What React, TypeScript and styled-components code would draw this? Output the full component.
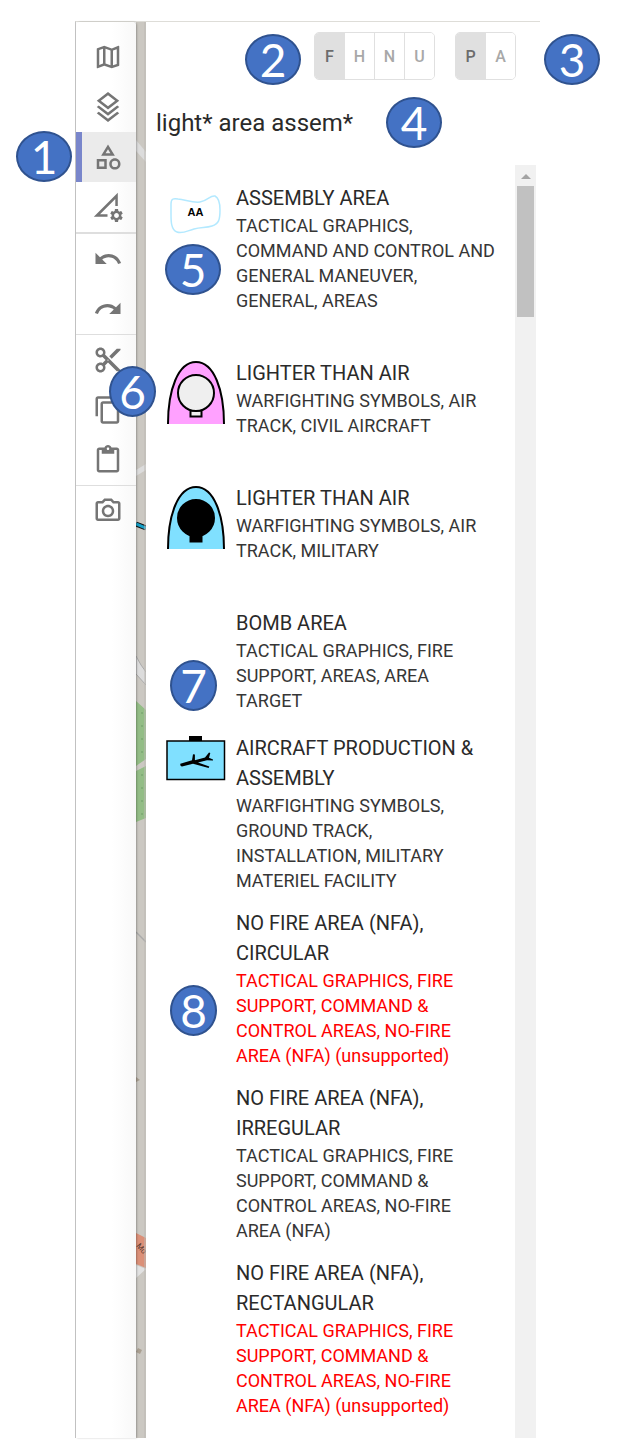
import React from 'react';
import styled, { createGlobalStyle, css } from 'styled-components';
import {
  MdContentCopy,
  MdContentCut,
  MdContentPaste,
  MdOutlineCategory,
  MdOutlineMap,
  MdOutlinePhotoCamera,
  MdRedo,
  MdSettings,
  MdUndo,
} from 'react-icons/md';

const GlobalStyle = createGlobalStyle`
  *, *::before, *::after { box-sizing: border-box; }
  body {
    margin: 0;
    background: #ffffff;
    color: #2a2a2a;
    font-family: Roboto, "Liberation Sans", sans-serif;
  }
`;

const Page = styled.div`
  padding: 21px 97px 14px 75px;
`;

const Frame = styled.main`
  position: relative;
  display: flex;
  border-top: 1px solid #deddd8;
  border-left: 1px solid #c4c4c4;
`;

const Toolbar = styled.nav`
  position: relative;
  z-index: 2;
  flex: 0 0 60px;
  padding-top: 10px;
  border-radius: 4px 4px 0 0;
  background: linear-gradient(90deg, #ffffff 60%, #f8f8f8);
  box-shadow: 1px 0 2px rgba(0, 0, 0, 0.25);
`;

const Tool = styled.button<{ $active?: boolean }>`
  display: flex;
  align-items: center;
  justify-content: center;
  width: 100%;
  height: 50px;
  padding: 0 0 0 3px;
  border: 0;
  background: transparent;
  color: #757575;
  cursor: pointer;
  ${(p) =>
    p.$active &&
    css`
      background: #ebebeb;
      box-shadow: inset 6px 0 #7986cb;
    `}
`;

const ToolSlot = styled.div`
  position: relative;
`;

const Divider = styled.hr<{ $thick?: boolean }>`
  height: ${(p) => (p.$thick ? 2 : 1)}px;
  margin: 0;
  border: 0;
  background: #dedede;
`;

const MapStrip = styled.div`
  flex: 0 0 10px;
  position: relative;
  overflow: hidden;
  background: #cbc8c2;
`;

const MapDrawing = styled.svg`
  position: absolute;
  top: 0;
  left: 0;
`;

const Panel = styled.section`
  position: relative;
  z-index: 1;
  flex: 1;
  min-width: 0;
  display: flex;
  flex-direction: column;
  margin-right: 4px;
  border-radius: 4px 4px 0 0;
  background: #ffffff;
`;

const Filters = styled.div`
  display: flex;
  justify-content: flex-end;
  gap: 20px;
  padding: 10px 20px 0;
`;

const Group = styled.div`
  position: relative;
  display: flex;
  border: 1px solid #e0e0e0;
  border-radius: 5px;
`;

const Toggle = styled.button<{ $on?: boolean }>`
  width: 30px;
  height: 46px;
  padding: 0;
  border: 0;
  background: ${(p) => (p.$on ? '#e0e0e0' : '#ffffff')};
  color: ${(p) => (p.$on ? '#6c6c6c' : '#a8a8a8')};
  font: 500 16px Roboto, "Liberation Sans", sans-serif;
  cursor: pointer;
  & + & { border-left: 1px solid #e0e0e0; }
  &:first-child { width: 29px; border-radius: 4px 0 0 4px; }
  &:last-of-type { border-radius: 0 4px 4px 0; }
`;

const SearchBar = styled.div`
  position: relative;
  padding: 25px 20px 0 10px;
`;

const SearchInput = styled.input`
  display: block;
  width: 100%;
  height: 36px;
  padding: 0;
  border: 0;
  outline: 0;
  background: transparent;
  color: #2a2a2a;
  font: 400 24px/36px Roboto, "Liberation Sans", sans-serif;
`;

const ResultsArea = styled.div`
  display: flex;
  margin-top: 24px;
`;

const Results = styled.ul`
  flex: 1;
  min-width: 0;
  margin: 0;
  padding: 17px 20px 6px;
  list-style: none;
`;

const Result = styled.li<{ $tall?: boolean }>`
  position: relative;
  display: flex;
  gap: 10px;
  min-height: ${(p) => (p.$tall ? 175 : 125)}px;
`;

const Thumb = styled.div`
  flex: 0 0 60px;
`;

const ResultText = styled.div`
  flex: 1;
  min-width: 0;
  padding-top: 1px;
`;

const Title = styled.h2`
  margin: 0;
  font-size: 20px;
  font-weight: 400;
  line-height: 30px;
`;

const Path = styled.p<{ $unsupported?: boolean }>`
  margin: 0;
  color: ${(p) => (p.$unsupported ? '#ff0000' : '#363636')};
  font-size: 18px;
  line-height: 25px;
`;

const ScrollTrack = styled.div`
  flex: 0 0 21px;
  display: flex;
  flex-direction: column;
  align-items: center;
  background: #f1f1f1;
`;

const ScrollArrow = styled.div`
  margin: 9px 0 7px;
  border: 5px solid transparent;
  border-top: 0;
  border-bottom-color: #a3a3a3;
`;

const ScrollThumb = styled.div`
  width: 17px;
  height: 131px;
  background: #c1c1c1;
`;

const Callout = styled.span<{ $x: number; $y: number; $narrow?: boolean }>`
  position: absolute;
  z-index: 3;
  left: ${(p) => p.$x}px;
  top: ${(p) => p.$y}px;
  display: flex;
  align-items: center;
  justify-content: center;
  width: ${(p) => (p.$narrow ? 47 : 56)}px;
  height: 51px;
  border: 2px solid #2f528f;
  border-radius: 50%;
  background: #4472c4;
  color: #ffffff;
  font: 400 46px/47px Lato, sans-serif;
`;

const LayersIcon = () => (
  <svg width="30" height="30" viewBox="0 0 24 24" fill="currentColor" aria-hidden="true">
    <path d="M12 0 3 7l9 7 9-7-9-7zm0 2.53L17.74 7 12 11.47 6.26 7 12 2.53z" />
    <path d="M21 12l-9 7-9-7 1.62-1.26L12 16.47l7.37-5.73L21 12z" />
    <path d="M21 17l-9 7-9-7 1.62-1.26L12 21.47l7.37-5.73L21 17z" />
  </svg>
);

const AngleSettingsIcon = () => (
  <svg width="30" height="30" viewBox="0 0 30 30" fill="currentColor" aria-hidden="true">
    <path d="M0.800 24.800L24.800 0.800V14H22.300V7L7 22.300H14.500V24.800Z" />
    <MdSettings x="15.500" y="15.500" size={16} />
  </svg>
);

const AssemblyAreaSymbol = () => (
  <svg width="60" height="70" viewBox="0 0 60 70" aria-hidden="true">
    <path
      d="M5 22C5 17 7 16 12 17C20 18 27 21 34 20C42 19 44 13 49 14C53 16 54 21 54 28C54 37 53 42 46 44C40 46 35 45 28 47C21 49 16 52 11 50C5 48 5 39 5 32Z"
      fill="#fff"
      stroke="#b3e9ff"
      strokeWidth="1.500"
    />
    <text x="29.500" y="34" textAnchor="middle" fontFamily="Liberation Sans, sans-serif" fontWeight="700" fontSize="11">
      AA
    </text>
  </svg>
);

const BalloonSymbol = ({ fill, balloon }: { fill: string; balloon: string }) => (
  <svg width="60" height="70" viewBox="0 0 60 70" stroke="#000" strokeWidth="2" aria-hidden="true">
    <path d="M2 67C2 33 12 5 30 5C48 5 58 33 58 67" fill={fill} />
    <rect x="24.500" y="53.500" width="11" height="6" fill={balloon} />
    <circle cx="30" cy="36" r="18" fill={balloon} />
  </svg>
);

const AircraftFacilitySymbol = () => (
  <svg width="60" height="70" viewBox="0 0 60 70" aria-hidden="true">
    <rect x="23" y="4" width="13" height="5" />
    <rect x="1" y="9" width="57.500" height="38.500" fill="#80e0ff" stroke="#000" strokeWidth="1.500" />
    <path d="M14.300 31.800L26 28.300L27 22.300L28.900 22.500V28.300L39 25.500L43 20.500L44.300 21L43 25.800L47 27.500V28.500L41 28.200L32 30.500L43.300 34.500L42.700 36L27 31.700L16 34.400Q14 34.300 14.300 31.800Z" />
  </svg>
);

const MapBackdrop = () => (
  <MapDrawing width="10" height="1416" viewBox="0 0 10 1416" aria-hidden="true">
    <path d="M0 118L10 130V140L0 129Z" fill="#dcdcdc" />
    <path d="M0 448L10 442V448L0 454Z" fill="#dcdcdc" />
    <path d="M0 502L10 506" stroke="#111" strokeWidth="5" />
    <path d="M0 502L10 506" stroke="#16a0c8" strokeWidth="3" />
    <path d="M0 634Q5 644 10 650V663L0 652Z" fill="#dcdcdc" stroke="#aaa" />
    <path d="M0 679L10 688V737L0 744ZM0 749L10 744V796L0 800Z" fill="#93bd86" />
    <path d="M6 690V735M6 752V795" stroke="#6e9d68" strokeDasharray="2 11" />
    <path d="M0 910L10 920" stroke="#aaa" strokeWidth="1.500" />
    <path d="M0 1055l4 3-4 2z" fill="#aaa092" />
    <path d="M0 1211L10 1216V1246L0 1242Z" fill="#db9078" />
    <text x="0" y="1224" fontSize="8" fontFamily="Liberation Sans, sans-serif" fill="#4c332c" transform="rotate(50 0 1224)">
      Mo
    </text>
    <path d="M0 1243L10 1247L0 1256Z" fill="#e2e2e2" />
    <path d="M2 1326l4 2-2 4-4-2z" fill="#aaa092" />
    <path d="M9 0V1416" stroke="#bcb9b4" />
  </MapDrawing>
);

type ResultData = {
  title: string;
  path: string;
  tall?: boolean;
  unsupported?: boolean;
  symbol?: React.ReactNode;
  callout?: { n: number; x: number; y: number; narrow?: boolean };
};

const results: ResultData[] = [
  {
    title: 'ASSEMBLY AREA',
    path: 'TACTICAL GRAPHICS, COMMAND AND CONTROL AND GENERAL MANEUVER, GENERAL, AREAS',
    tall: true,
    symbol: <AssemblyAreaSymbol />,
    callout: { n: 5, x: -1, y: 62 },
  },
  {
    title: 'LIGHTER THAN AIR',
    path: 'WARFIGHTING SYMBOLS, AIR TRACK, CIVIL AIRCRAFT',
    symbol: <BalloonSymbol fill="#ffa1ff" balloon="#efefef" />,
  },
  {
    title: 'LIGHTER THAN AIR',
    path: 'WARFIGHTING SYMBOLS, AIR TRACK, MILITARY',
    symbol: <BalloonSymbol fill="#80e0ff" balloon="#000" />,
  },
  {
    title: 'BOMB AREA',
    path: 'TACTICAL GRAPHICS, FIRE SUPPORT, AREAS, AREA TARGET',
    callout: { n: 7, x: 4, y: 53, narrow: true },
  },
  {
    title: 'AIRCRAFT PRODUCTION & ASSEMBLY',
    path: 'WARFIGHTING SYMBOLS, GROUND TRACK, INSTALLATION, MILITARY MATERIEL FACILITY',
    tall: true,
    symbol: <AircraftFacilitySymbol />,
  },
  {
    title: 'NO FIRE AREA (NFA), CIRCULAR',
    path: 'TACTICAL GRAPHICS, FIRE SUPPORT, COMMAND & CONTROL AREAS, NO-FIRE AREA (NFA) (unsupported)',
    tall: true,
    unsupported: true,
    callout: { n: 8, x: 4, y: 78, narrow: true },
  },
  {
    title: 'NO FIRE AREA (NFA), IRREGULAR',
    path: 'TACTICAL GRAPHICS, FIRE SUPPORT, COMMAND & CONTROL AREAS, NO-FIRE AREA (NFA)',
    tall: true,
  },
  {
    title: 'NO FIRE AREA (NFA), RECTANGULAR',
    path: 'TACTICAL GRAPHICS, FIRE SUPPORT, COMMAND & CONTROL AREAS, NO-FIRE AREA (NFA) (unsupported)',
    tall: true,
    unsupported: true,
  },
];

export default function App() {
  return (
    <Page>
      <GlobalStyle />
      <Frame>
        <Toolbar aria-label="Tools">
          <Tool aria-label="Maps"><MdOutlineMap size={30} /></Tool>
          <Tool aria-label="Layers"><LayersIcon /></Tool>
          <ToolSlot>
            <Tool $active aria-label="Symbols"><MdOutlineCategory size={30} /></Tool>
            <Callout $x={-60} $y={-1}>1</Callout>
          </ToolSlot>
          <Tool aria-label="Measure settings"><AngleSettingsIcon /></Tool>
          <Divider $thick />
          <Tool aria-label="Undo"><MdUndo size={30} /></Tool>
          <Tool aria-label="Redo"><MdRedo size={30} /></Tool>
          <Divider />
          <Tool aria-label="Cut"><MdContentCut size={30} /></Tool>
          <ToolSlot>
            <Tool aria-label="Copy"><MdContentCopy size={30} /></Tool>
            <Callout $x={33} $y={-19} $narrow>6</Callout>
          </ToolSlot>
          <Tool aria-label="Paste"><MdContentPaste size={30} /></Tool>
          <Divider />
          <Tool aria-label="Snapshot"><MdOutlinePhotoCamera size={30} /></Tool>
        </Toolbar>
        <MapStrip><MapBackdrop /></MapStrip>
        <Panel>
          <Filters>
            <Group role="group" aria-label="Affiliation">
              <Toggle $on aria-pressed="true">F</Toggle>
              <Toggle>H</Toggle>
              <Toggle>N</Toggle>
              <Toggle>U</Toggle>
              <Callout $x={-70} $y={1}>2</Callout>
            </Group>
            <Group role="group" aria-label="Status">
              <Toggle $on aria-pressed="true">P</Toggle>
              <Toggle>A</Toggle>
              <Callout $x={88} $y={1}>3</Callout>
            </Group>
          </Filters>
          <SearchBar>
            <SearchInput aria-label="Search symbols" defaultValue="light* area assem*" />
            <Callout $x={240} $y={17}>4</Callout>
          </SearchBar>
          <ResultsArea>
            <Results>
              {results.map((r, i) => (
                <Result key={i} $tall={r.tall}>
                  <Thumb>{r.symbol}</Thumb>
                  <ResultText>
                    <Title>{r.title}</Title>
                    <Path $unsupported={r.unsupported}>{r.path}</Path>
                  </ResultText>
                  {r.callout && (
                    <Callout $x={r.callout.x} $y={r.callout.y} $narrow={r.callout.narrow}>
                      {r.callout.n}
                    </Callout>
                  )}
                </Result>
              ))}
            </Results>
            <ScrollTrack>
              <ScrollArrow />
              <ScrollThumb />
            </ScrollTrack>
          </ResultsArea>
        </Panel>
      </Frame>
    </Page>
  );
}
